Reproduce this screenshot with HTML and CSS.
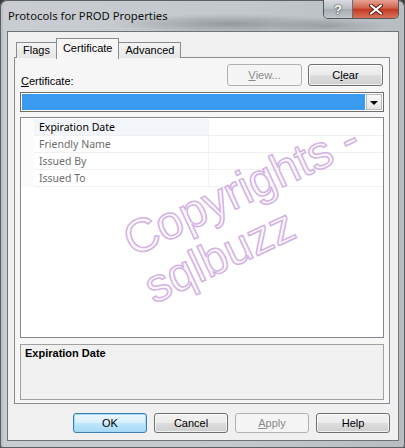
FILE: index.html
```html
<!DOCTYPE html>
<html>
<head>
<meta charset="utf-8">
<link rel="stylesheet" href="styles.css">
</head>
<body>
<div class="window">
  <div class="titlebar">
    <span class="title">Protocols for PROD Properties</span>
    <div class="caption-btns">
      <div class="cap cap-help">?</div>
      <div class="cap cap-close">
        <svg width="14" height="11" viewBox="0 0 14 11"><path d="M2 1.5 L12 9.5 M12 1.5 L2 9.5" stroke="#5a1d14" stroke-width="4" stroke-linecap="round"/><path d="M2 1.5 L12 9.5 M12 1.5 L2 9.5" stroke="#ffffff" stroke-width="2.2" stroke-linecap="round"/></svg>
      </div>
    </div>
  </div>
  <div class="client">
    <div class="tabs">
      <div class="tab">Flags</div>
      <div class="tab active">Certificate</div>
      <div class="tab">Advanced</div>
    </div>
    <div class="panel">
      <div class="cert-row">
        <span class="lbl"><u>C</u>ertificate:</span>
        <div class="cert-btns">
          <div class="btn disabled"><u>V</u>iew...</div>
          <div class="btn">C<u>l</u>ear</div>
        </div>
      </div>
      <div class="combo">
        <div class="combo-sel"></div>
        <div class="combo-arrow"><span class="tri"></span></div>
      </div>
      <div class="grid">
        <div class="row head"><span class="gut"></span><span class="name">Expiration Date</span><span class="val"></span></div>
        <div class="row"><span class="gut"></span><span class="name">Friendly Name</span><span class="val"></span></div>
        <div class="row"><span class="gut"></span><span class="name">Issued By</span><span class="val"></span></div>
        <div class="row"><span class="gut"></span><span class="name">Issued To</span><span class="val"></span></div>
      </div>
      <div class="desc">Expiration Date</div>
    </div>
    <div class="footer">
      <div class="btn btn-wide default">OK</div>
      <div class="btn btn-wide">Cancel</div>
      <div class="btn btn-wide disabled"><u>A</u>pply</div>
      <div class="btn btn-wide">Help</div>
    </div>
  </div>
  <svg class="watermark" width="405" height="448" viewBox="0 0 405 448">
    <text class="wm" x="0" y="0" transform="translate(133 257) rotate(-25)">Copyrights -</text>
    <text class="wm" x="0" y="0" transform="translate(154 304) rotate(-25)">sqlbuzz</text>
  </svg>
</div>
</body>
</html>
```

FILE: styles.css
```css
html, body {
  margin: 0;
  padding: 0;
}
body {
  width: 405px;
  height: 448px;
  background: #3a3a3a;
  overflow: hidden;
}
.window {
  position: relative;
  box-sizing: border-box;
  width: 405px;
  height: 448px;
  padding: 0 6px 7px 7px;
  display: flex;
  flex-direction: column;
  border-radius: 7px 7px 3px 3px;
  background:
    radial-gradient(ellipse 120px 10px at 230px 24px, rgba(90,95,100,0.45), rgba(90,95,100,0) 100%),
    radial-gradient(ellipse 60px 8px at 330px 26px, rgba(90,95,100,0.3), rgba(90,95,100,0) 100%),
    linear-gradient(to right, #aeb3b8 0px, #c9cdd1 4px, #c3c8cc 60%, #b8bdc1 100%);
  box-shadow: inset 0 0 0 1px #5c5f63;
  font-family: "Liberation Sans", Arial, sans-serif;
  font-size: 11px;
  color: #000;
}
.titlebar {
  height: 31px;
  display: flex;
  align-items: flex-start;
  flex: none;
}
.title {
  padding: 8px 0 0 1px;
  line-height: 15px;
  font-family: "Noto Sans", "Open Sans", sans-serif;
  font-size: 11.3px;
  color: #111;
}
.caption-btns {
  margin-left: auto;
  display: flex;
  height: 19px;
  border: 1px solid #53575c;
  border-top: none;
  border-radius: 0 0 5px 5px;
  overflow: hidden;
  box-sizing: border-box;
}
.cap {
  height: 18px;
  display: flex;
  align-items: center;
  justify-content: center;
}
.cap-help {
  width: 28px;
  border-right: 1px solid #6a6e72;
  background: linear-gradient(#d8dce0, #b9bec3 50%, #a5abb1 51%, #c2c7cc);
  color: #fff;
  font-family: "Liberation Sans", Arial, sans-serif;
  font-weight: bold;
  font-size: 13px;
  text-shadow: 0 0 2px #3a3d40, 0 0 1px #3a3d40;
}
.cap-close {
  width: 45px;
  background: linear-gradient(#e8a393, #d0624c 45%, #c23a22 52%, #d8745c);
}
.client {
  flex: 1;
  display: flex;
  flex-direction: column;
  background: #f0f0f0;
  border: 1px solid #6f7377;
  padding: 6px 8px 7px 6px;
  min-height: 0;
}
.tabs {
  display: flex;
  align-items: flex-end;
  height: 20px;
  padding-left: 2px;
  margin-bottom: -1px;
  position: relative;
  z-index: 1;
}
.tab {
  box-sizing: border-box;
  height: 16px;
  line-height: 15px;
  padding: 0 6px;
  border: 1px solid #898c95;
  border-bottom: none;
  background: linear-gradient(#f3f3f3, #e6e6e6);
  margin-right: -1px;
}
.tab.active {
  height: 21px;
  line-height: 18px;
  padding: 0 6px 2px;
  background: #f6f6f6;
  position: relative;
  z-index: 2;
  margin-bottom: -1px;
}
.panel {
  flex: 1;
  min-height: 0;
  display: flex;
  flex-direction: column;
  background: #f6f6f6;
  border: 1px solid #898c95;
  padding: 6px 5px 3px 5px;
}
.cert-row {
  display: flex;
  align-items: flex-end;
  height: 22px;
  flex: none;
}
.lbl {
  line-height: 13px;
  padding-left: 1px;
  margin-bottom: -2px;
}
.cert-btns {
  margin-left: auto;
  display: flex;
  gap: 6px;
  margin-right: 1px;
}
.btn {
  box-sizing: border-box;
  width: 75px;
  height: 22px;
  display: flex;
  align-items: center;
  justify-content: center;
  border: 1px solid #707070;
  border-radius: 3px;
  background: linear-gradient(#f2f2f2, #ebebeb 50%, #dddddd 51%, #cfcfcf);
  box-shadow: inset 0 0 0 1px rgba(255,255,255,0.7);
  color: #000;
}
.btn.disabled {
  border-color: #adb2b5;
  background: #f4f4f4;
  color: #8a8a8a;
  box-shadow: none;
}
.btn.default {
  border-color: #3c7fb1;
  background: linear-gradient(#eaf6fd, #d9f0fc 50%, #bee6fd 51%, #a7d9f5);
  box-shadow: inset 0 0 0 1px #a5d8f4;
}
.combo {
  margin-top: 6px;
  height: 20px;
  flex: none;
  box-sizing: border-box;
  border: 1px solid #6e6e6e;
  background: #fff;
  display: flex;
  padding: 1px;
}
.combo-sel {
  flex: 1;
  background: #3a9af0;
}
.combo-arrow {
  width: 16px;
  margin-left: 1px;
  box-sizing: border-box;
  border: 1px solid #b9b9b9;
  background: linear-gradient(#f7f7f7, #e3e3e3);
  display: flex;
  align-items: center;
  justify-content: center;
}
.tri {
  width: 0;
  height: 0;
  border-left: 4px solid transparent;
  border-right: 4px solid transparent;
  border-top: 4px solid #000;
  margin-top: 1px;
}
.grid {
  margin-top: 5px;
  flex: 1;
  min-height: 0;
  background: #fff;
  border: 1px solid #828790;
  padding-top: 1px;
  font-family: "Noto Sans", "Open Sans", sans-serif;
  font-size: 10.5px;
}
.row {
  display: flex;
  height: 17px;
  line-height: 16px;
}
.gut {
  width: 13px;
  background: #fbfbfb;
}
.name {
  width: 169px;
  padding-left: 5px;
  color: #6d6d6d;
  border-bottom: 1px solid #f0f0f0;
  border-right: 1px solid #f3f3f3;
}
.val {
  flex: 1;
  border-bottom: 1px solid #f0f0f0;
}
.row.head .name {
  background: #f2f5f9;
  color: #000;
}
.desc {
  margin-top: 6px;
  height: 56px;
  flex: none;
  box-sizing: border-box;
  border: 1px solid #a0a0a0;
  background: #f0f0f0;
  padding: 2px 4px;
  font-weight: bold;
  line-height: 13px;
}
.footer {
  margin-top: 9px;
  display: flex;
  justify-content: flex-end;
  gap: 7px;
  flex: none;
}
.btn-wide {
  width: 74px;
  height: 20px;
}
.watermark {
  position: absolute;
  left: 0;
  top: 0;
  pointer-events: none;
}
.wm {
  font-family: "Liberation Sans", Arial, sans-serif;
  font-size: 47px;
  fill: rgba(246, 238, 250, 0.35);
  stroke: #d3b2e4;
  stroke-width: 1.5;
}
```
